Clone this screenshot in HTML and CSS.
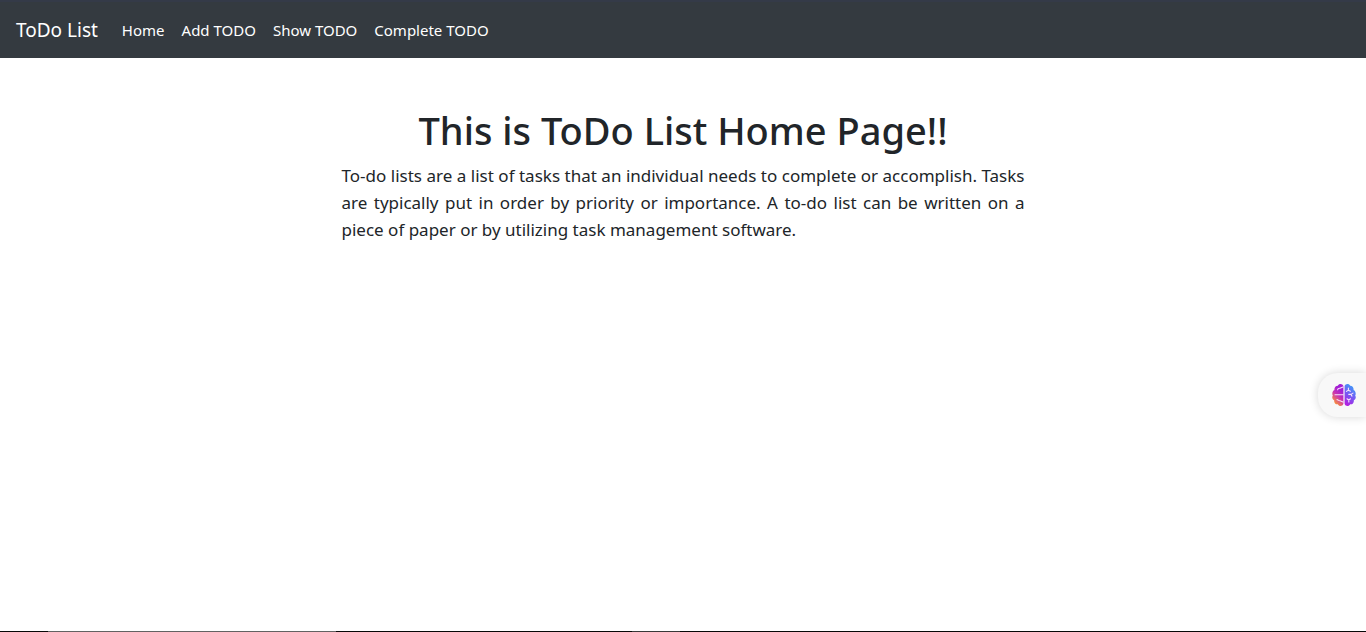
FILE: index.html
```html
<!DOCTYPE html>
<html lang="en">
<head>
  <meta charset="utf-8">
  <meta name="viewport" content="width=device-width, initial-scale=1">
  <title>ToDo List</title>
  <link rel="stylesheet" href="styles.css">
</head>
<body>
  <nav class="navbar">
    <a class="brand" href="#">ToDo List</a>
    <ul class="nav-list">
      <li><a class="nav-link" href="#">Home</a></li>
      <li><a class="nav-link" href="#">Add TODO</a></li>
      <li><a class="nav-link" href="#">Show TODO</a></li>
      <li><a class="nav-link" href="#">Complete TODO</a></li>
    </ul>
  </nav>
  <main class="content">
    <h1 class="title">This is ToDo List Home Page!!</h1>
    <p class="lead">To-do lists are a list of tasks that an individual needs to complete or accomplish. Tasks are typically put in order by priority or importance. A to-do list can be written on a <span class="phrase">piece of</span> paper or by utilizing task management software.</p>
  </main>
  <button class="assistant" type="button" aria-label="Open assistant">
    <svg class="brain" viewBox="0 0 24 24" aria-hidden="true">
      <defs>
        <linearGradient id="left" x1="0.7" y1="0" x2="0.2" y2="1">
          <stop offset="0.2" stop-color="#a21fd6"/>
          <stop offset="0.5" stop-color="#c832b4"/>
          <stop offset="0.9" stop-color="#fb9438"/>
        </linearGradient>
        <linearGradient id="right" x1="0.7" y1="0" x2="0.3" y2="1">
          <stop offset="0" stop-color="#38a4f8"/>
          <stop offset="0.5" stop-color="#735cf4"/>
          <stop offset="1" stop-color="#b21de0"/>
        </linearGradient>
      </defs>
      <path fill="url(#left)" d="M11.4 3C10.7 .4 6.8.2 5.8 2.8 3.4 2.8 2 5 2.5 7.1.3 8-.2 11 .8 12.4-.4 14.3.4 16.5 2.2 17.2 1.8 19.7 3.6 21.6 5.8 21.3 7 23.9 10.7 23.5 11.4 20.8Z"/>
      <path fill="url(#right)" d="M12.6 3C13.3.4 17.2.2 18.2 2.8c2.4 0 3.8 2.2 3.3 4.3 2.2.9 2.7 3.9 1.7 5.3 1.2 1.9.4 4.1-1.4 4.8.4 2.5-1.4 4.4-3.6 4.1-1.2 2.6-4.9 2.2-5.6-.5Z"/>
      <g fill="none" stroke="#f8e4fc" stroke-width="1.1" stroke-linecap="round">
        <path d="M5.6 6.8c.2-1.2 1.2-1.6 2.4-1.5L11 4M3 11.8h8.2M5 16.6c1.2 0 1.5 1.4 3 1.2L11 19"/>
        <path d="M16.4 5v2.2l-2 1.2m2-1.2 2 1M16.8 11.4h2.1l1.1 1.7m-1.1-1.7 2.1-1.3M15 15.8l1.8 1.2 1.7-1.2M16.8 17v2"/>
      </g>
    </svg>
  </button>
  <div class="taskbar-edge" aria-hidden="true">
    <span class="edge-search"></span>
    <span class="edge-app"></span>
  </div>
</body>
</html>
```
FILE: styles.css
```css
* {
  box-sizing: border-box;
}

body {
  margin: 0;
  min-height: 100vh;
  background: #fff;
  color: #212529;
  font-family: "Segoe UI", "Noto Sans", sans-serif;
  font-size: 15px;
  line-height: 24px;
}

.navbar {
  display: flex;
  align-items: center;
  padding: 8px 16px;
  gap: 16px;
  border-top: 2px solid #343a48;
  background: #343a40;
}

.brand,
.nav-link {
  color: #fff;
  text-decoration: none;
  white-space: nowrap;
}

.brand {
  font-size: 19px;
}

.nav-list {
  display: flex;
  gap: 1px;
  margin: 0;
  padding: 0;
  list-style: none;
}

.nav-link {
  display: block;
  padding: 8px;
}

.content {
  width: 50%;
  margin: 48px auto 0;
}

.title {
  margin: 0 0 8px;
  font-size: 38px;
  font-weight: 500;
  line-height: 48px;
  text-align: center;
}

.lead {
  margin: 0;
  font-size: 17px;
  font-weight: 400;
  line-height: 27px;
  text-align: justify;
}

.phrase {
  white-space: nowrap;
}

.assistant {
  position: fixed;
  top: 373px;
  right: 0;
  display: flex;
  align-items: center;
  width: 48px;
  height: 44px;
  padding: 0 10px 0 14px;
  border: 0;
  border-radius: 20px 0 0 20px;
  background: #f8f8f8;
  box-shadow: 0 0 10px rgba(0, 0, 0, 0.16);
  cursor: pointer;
}

.brain {
  width: 24px;
  height: 24px;
}

.taskbar-edge {
  position: fixed;
  right: 0;
  bottom: 0;
  left: 0;
  display: flex;
  gap: 296px;
  height: 1px;
  padding-left: 48px;
  background: #080808;
}

.edge-search {
  width: 288px;
  background: #626262;
}

.edge-app {
  width: 48px;
  background: #383838;
}
```
